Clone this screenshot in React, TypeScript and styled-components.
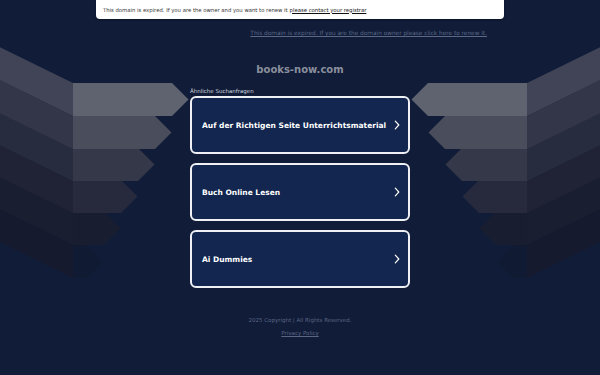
import React from "react";
import styled, { createGlobalStyle } from "styled-components";

const Global = createGlobalStyle`
  html, body { margin: 0; padding: 0; background: #101c38; }
  body { font-family: "DejaVu Sans", Verdana, sans-serif; }
`;

const Page = styled.div`
  position: relative;
  width: 600px;
  height: 375px;
  overflow: hidden;
  background: #101c38;
`;

const Backdrop = styled.svg`
  position: absolute;
  left: 0;
  top: 0;
  width: 600px;
  height: 375px;
  z-index: 0;
`;

const Content = styled.div`
  position: relative;
  z-index: 1;
  display: flex;
  flex-direction: column;
  align-items: center;
`;

const Banner = styled.div`
  width: 408px;
  height: 19px;
  box-sizing: border-box;
  background: #ffffff;
  border-radius: 0 0 4px 4px;
  display: flex;
  align-items: center;
  padding: 0 7px;
  font-size: 5.3px;
  color: #333;
  white-space: nowrap;
  box-shadow: 0 1px 2px rgba(0, 0, 0, 0.3);
`;

const BannerLink = styled.a`
  color: #111;
  text-decoration: underline;
  margin-left: 2px;
`;

const NoticeRow = styled.div`
  width: 408px;
  display: flex;
  justify-content: flex-end;
  padding-right: 17px;
  box-sizing: border-box;
  margin-top: 11px;
`;

const Notice = styled.a`
  font-size: 5.8px;
  color: #5b6886;
  text-decoration: underline;
  white-space: nowrap;
`;

const Title = styled.h1`
  margin: 27px 0 0;
  font-size: 10px;
  font-weight: bold;
  color: #8a8f9c;
  line-height: 14px;
`;

const List = styled.div`
  width: 220px;
  margin-top: 11px;
  display: flex;
  flex-direction: column;
`;

const Label = styled.div`
  font-size: 5.5px;
  color: #d2d5de;
  line-height: 6px;
  margin-bottom: 2px;
`;

const Cards = styled.div`
  display: flex;
  flex-direction: column;
  gap: 9px;
`;

const Card = styled.a`
  height: 58px;
  box-sizing: border-box;
  border: 2px solid #eef0f4;
  border-radius: 6px;
  background: #12264f;
  display: flex;
  align-items: center;
  justify-content: space-between;
  padding: 0 8px 0 10px;
  color: #ffffff;
  font-size: 7.5px;
  font-weight: bold;
  white-space: nowrap;
  text-decoration: none;
`;

const Chevron = styled.svg`
  width: 6px;
  height: 10px;
`;

const Footer = styled.div`
  margin-top: 29px;
  display: flex;
  flex-direction: column;
  align-items: center;
  gap: 7px;
  font-size: 5.5px;
  color: #5b6584;
`;

const FooterLink = styled.a`
  color: #5b6584;
  text-decoration: underline;
`;

const layers = [
  { y: 83, end: 172, front: "#5f626f", side: "#414457" },
  { y: 116, end: 155, front: "#4a4d5c", side: "#323648" },
  { y: 148, end: 138, front: "#343849", side: "#282c3f" },
  { y: 180, end: 121, front: "#262a3c", side: "#1f2335" },
  { y: 212, end: 104, front: "#191d30", side: "#1a1e31" },
  { y: 245, end: 87, front: "#111a33", side: "#151a2f" },
];

const Side: React.FC<{ mirror?: boolean }> = ({ mirror }) => (
  <g transform={mirror ? "translate(600,0) scale(-1,1)" : undefined}>
    {layers
      .slice()
      .reverse()
      .map((l, i) => {
        const h = 33;
        const slope = 0.49;
        const dy = 73 * slope;
        return (
          <g key={i}>
            <polygon
              points={`0,${l.y - dy} 73,${l.y} 73,${l.y + h} 0,${l.y + h - dy}`}
              fill={l.side}
            />
            <polygon
              points={`73,${l.y} ${l.end},${l.y} ${l.end + h / 2},${l.y + h / 2} ${l.end},${l.y + h} 73,${l.y + h}`}
              fill={l.front}
            />
          </g>
        );
      })}
  </g>
);

const items = [
  "Auf der Richtigen Seite Unterrichtsmaterial",
  "Buch Online Lesen",
  "Ai Dummies",
];

export default function App() {
  return (
    <>
      <Global />
      <Page>
        <Backdrop viewBox="0 0 600 375">
          <Side />
          <Side mirror />
        </Backdrop>
        <Content>
          <Banner>
            This domain is expired. If you are the owner and you want to renew it
            <BannerLink href="#">please contact your registrar</BannerLink>
          </Banner>
          <NoticeRow>
            <Notice href="#">
              This domain is expired. If you are the domain owner please click here to renew it.
            </Notice>
          </NoticeRow>
          <Title>books-now.com</Title>
          <List>
            <Label>Ähnliche Suchanfragen</Label>
            <Cards>
              {items.map((t) => (
                <Card href="#" key={t}>
                  <span>{t}</span>
                  <Chevron viewBox="0 0 6 10">
                    <path d="M1.3 1.2 L4.8 5 L1.3 8.8" fill="none" stroke="#fff" strokeWidth="1.2" strokeLinecap="round" strokeLinejoin="round" />
                  </Chevron>
                </Card>
              ))}
            </Cards>
          </List>
          <Footer>
            <span>2025 Copyright | All Rights Reserved.</span>
            <FooterLink href="#">Privacy Policy</FooterLink>
          </Footer>
        </Content>
      </Page>
    </>
  );
}
